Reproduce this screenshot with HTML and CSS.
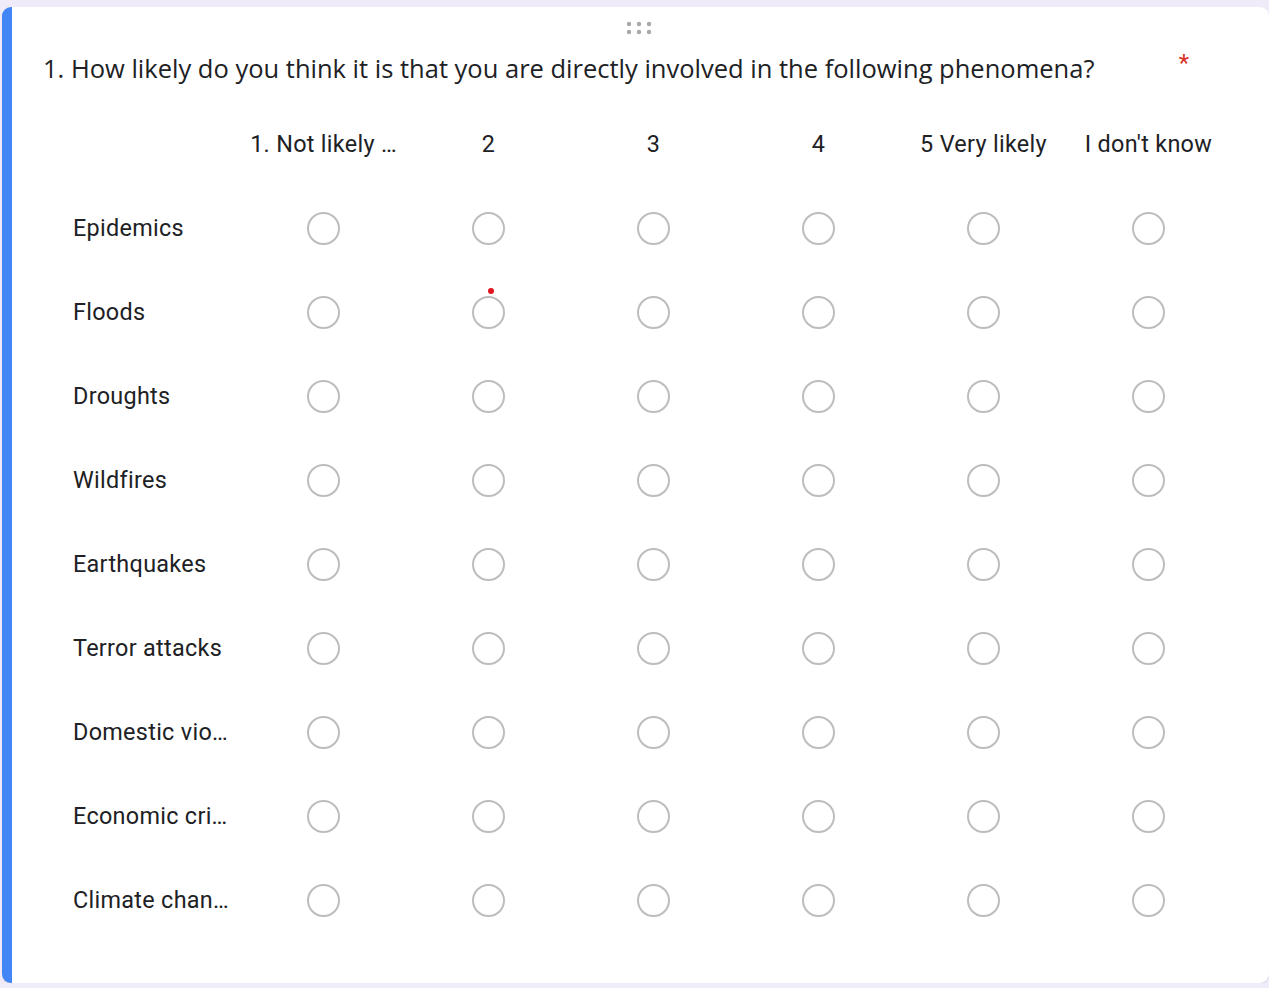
FILE: index.html
```html
<!DOCTYPE html>
<html lang="en">
<head>
<meta charset="utf-8">
<title>Grid question</title>
<link rel="stylesheet" href="styles.css">
</head>
<body>
<div class="card">
  <div class="handle">
    <svg width="26" height="14" viewBox="0 0 26 14" aria-hidden="true">
      <circle cx="3" cy="3" r="2.2"/><circle cx="13" cy="3" r="2.2"/><circle cx="23" cy="3" r="2.2"/>
      <circle cx="3" cy="11" r="2.2"/><circle cx="13" cy="11" r="2.2"/><circle cx="23" cy="11" r="2.2"/>
    </svg>
  </div>
  <div class="title-row">
    <div class="title">1. How likely do you think it is that you are directly involved in the following phenomena?</div>
    <span class="required">*</span>
  </div>
  <div class="grid">
    <div class="row header">
      <div class="label"></div>
      <div class="col">1. Not likely …</div>
      <div class="col">2</div>
      <div class="col">3</div>
      <div class="col">4</div>
      <div class="col">5 Very likely</div>
      <div class="col">I don't know</div>
    </div>
    <div class="row"><div class="label">Epidemics</div><div class="cell"><span class="radio"></span></div><div class="cell"><span class="radio"></span></div><div class="cell"><span class="radio"></span></div><div class="cell"><span class="radio"></span></div><div class="cell"><span class="radio"></span></div><div class="cell"><span class="radio"></span></div></div>
    <div class="row"><div class="label">Floods</div><div class="cell"><span class="radio"></span></div><div class="cell"><span class="radio"><span class="dot"></span></span></div><div class="cell"><span class="radio"></span></div><div class="cell"><span class="radio"></span></div><div class="cell"><span class="radio"></span></div><div class="cell"><span class="radio"></span></div></div>
    <div class="row"><div class="label">Droughts</div><div class="cell"><span class="radio"></span></div><div class="cell"><span class="radio"></span></div><div class="cell"><span class="radio"></span></div><div class="cell"><span class="radio"></span></div><div class="cell"><span class="radio"></span></div><div class="cell"><span class="radio"></span></div></div>
    <div class="row"><div class="label">Wildfires</div><div class="cell"><span class="radio"></span></div><div class="cell"><span class="radio"></span></div><div class="cell"><span class="radio"></span></div><div class="cell"><span class="radio"></span></div><div class="cell"><span class="radio"></span></div><div class="cell"><span class="radio"></span></div></div>
    <div class="row"><div class="label">Earthquakes</div><div class="cell"><span class="radio"></span></div><div class="cell"><span class="radio"></span></div><div class="cell"><span class="radio"></span></div><div class="cell"><span class="radio"></span></div><div class="cell"><span class="radio"></span></div><div class="cell"><span class="radio"></span></div></div>
    <div class="row"><div class="label">Terror attacks</div><div class="cell"><span class="radio"></span></div><div class="cell"><span class="radio"></span></div><div class="cell"><span class="radio"></span></div><div class="cell"><span class="radio"></span></div><div class="cell"><span class="radio"></span></div><div class="cell"><span class="radio"></span></div></div>
    <div class="row"><div class="label">Domestic vio…</div><div class="cell"><span class="radio"></span></div><div class="cell"><span class="radio"></span></div><div class="cell"><span class="radio"></span></div><div class="cell"><span class="radio"></span></div><div class="cell"><span class="radio"></span></div><div class="cell"><span class="radio"></span></div></div>
    <div class="row"><div class="label">Economic cri…</div><div class="cell"><span class="radio"></span></div><div class="cell"><span class="radio"></span></div><div class="cell"><span class="radio"></span></div><div class="cell"><span class="radio"></span></div><div class="cell"><span class="radio"></span></div><div class="cell"><span class="radio"></span></div></div>
    <div class="row"><div class="label">Climate chan…</div><div class="cell"><span class="radio"></span></div><div class="cell"><span class="radio"></span></div><div class="cell"><span class="radio"></span></div><div class="cell"><span class="radio"></span></div><div class="cell"><span class="radio"></span></div><div class="cell"><span class="radio"></span></div></div>
  </div>
</div>
</body>
</html>
```

FILE: styles.css
```css
html, body {
  margin: 0;
  padding: 0;
  background: #f0ebf8;
  overflow: hidden;
}
body {
  padding: 7px 0 0 2px;
  font-family: Roboto, "Liberation Sans", sans-serif;
  color: #202124;
}
.card {
  box-sizing: border-box;
  width: 1267px;
  height: 976px;
  background: #fff;
  border-radius: 9px;
  border-left: 10px solid #4285f4;
  box-shadow: 0 1px 1px rgba(0, 0, 0, 0.12);
  position: relative;
}
.handle {
  height: 40px;
  display: flex;
  justify-content: center;
  align-items: flex-start;
  padding-top: 14px;
  box-sizing: border-box;
}
.handle svg {
  fill: #a8a8a8;
  margin-left: -4px;
}
.title-row {
  display: flex;
  justify-content: space-between;
  align-items: flex-start;
  padding: 5px 80px 0 31px;
}
.title {
  font-family: "Open Sans", "Liberation Sans", sans-serif;
  font-size: 25.5px;
  line-height: 32px;
  color: #202124;
}
.required {
  color: #d93025;
  font-size: 24px;
  line-height: 20px;
  padding-top: 1px;
}
.grid {
  margin: 18px 0 0 51px;
}
.row {
  display: grid;
  grid-template-columns: 178px repeat(6, 165px);
  height: 84px;
  align-items: center;
}
.label {
  padding-left: 10px;
  font-size: 23.4px;
  letter-spacing: 0.3px;
  white-space: nowrap;
}
.col {
  text-align: center;
  font-size: 23.4px;
  letter-spacing: 0.3px;
  white-space: nowrap;
}
.cell {
  display: flex;
  justify-content: center;
}
.radio {
  position: relative;
  box-sizing: border-box;
  width: 33px;
  height: 33px;
  border: 2.5px solid #bdbdbd;
  border-radius: 50%;
}
.dot {
  position: absolute;
  width: 6px;
  height: 6px;
  border-radius: 50%;
  background: #e0141e;
  left: 14px;
  top: -10px;
}
```
